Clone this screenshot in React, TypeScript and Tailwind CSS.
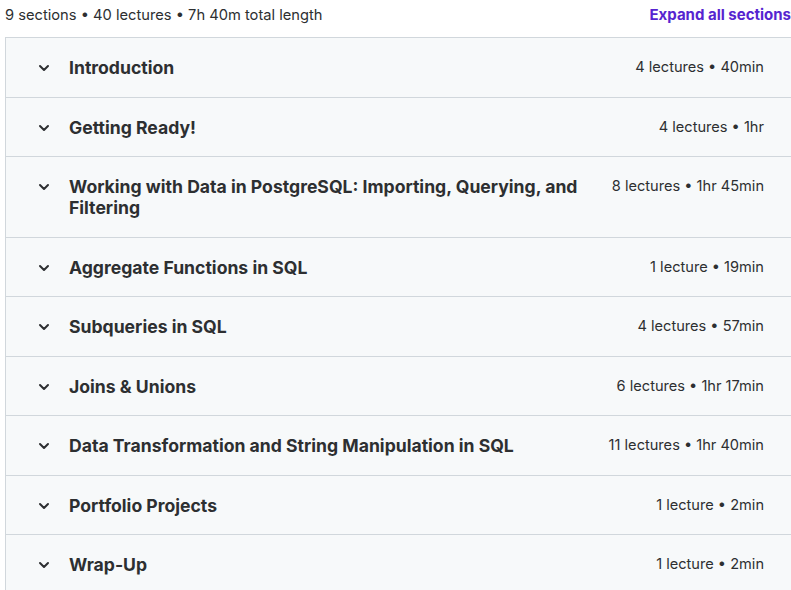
import React from "react";

const sections = [
  { title: "Introduction", meta: "4 lectures • 40min" },
  { title: "Getting Ready!", meta: "4 lectures • 1hr" },
  { title: "Working with Data in PostgreSQL: Importing, Querying, and Filtering", meta: "8 lectures • 1hr 45min" },
  { title: "Aggregate Functions in SQL", meta: "1 lecture • 19min" },
  { title: "Subqueries in SQL", meta: "4 lectures • 57min" },
  { title: "Joins & Unions", meta: "6 lectures • 1hr 17min" },
  { title: "Data Transformation and String Manipulation in SQL", meta: "11 lectures • 1hr 40min" },
  { title: "Portfolio Projects", meta: "1 lecture • 2min" },
  { title: "Wrap-Up", meta: "1 lecture • 2min" },
];

function Chevron() {
  return (
    <svg width="12" height="12" viewBox="0 0 12 12" className="mt-[5px] shrink-0">
      <polyline points="2,4 6,8 10,4" fill="none" stroke="#2d2f31" strokeWidth="2" strokeLinecap="round" strokeLinejoin="round" />
    </svg>
  );
}

export default function App() {
  return (
    <div className="w-[791px] h-[590px] overflow-hidden bg-white text-[#2d2f31]" style={{ fontFamily: "Inter, 'Noto Sans', sans-serif" }}>
      <div className="h-[30px] flex items-center justify-between pl-[5px]">
        <span className="text-[14.7px]">9 sections • 40 lectures • 7h 40m total length</span>
        <span className="text-[15px] font-bold text-[#5624d0] whitespace-nowrap">Expand all sections</span>
      </div>
      <div className="mt-[7px] ml-[5px] w-[790px] border border-[#d1d7dc]">
        {sections.map((s, i) => (
          <div
            key={i}
            className={"flex items-start bg-[#f7f9fa] pl-[32px] pr-[30px] pt-[19px] pb-[18.5px] " + (i > 0 ? "border-t border-[#d1d7dc]" : "")}
          >
            <Chevron />
            <div className="ml-[19px] w-[525px] text-[17.6px] font-bold leading-[21px]">{s.title}</div>
            <div className="ml-auto text-[14.6px] leading-[21px] whitespace-nowrap">{s.meta}</div>
          </div>
        ))}
      </div>
    </div>
  );
}
